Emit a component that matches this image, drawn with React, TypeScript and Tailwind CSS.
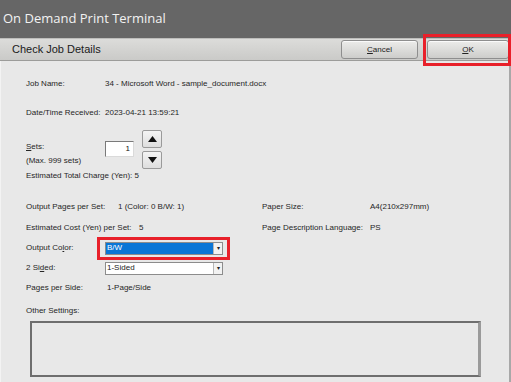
import { ReactNode } from 'react';

const font = { fontFamily: "'Liberation Sans', Arial, sans-serif" };

function Row({ children, className = '' }: { children: ReactNode; className?: string }) {
  return <div className={`flex h-[14px] items-center ${className}`}>{children}</div>;
}

function Select({ value, selected }: { value: string; selected?: boolean }) {
  return (
    <div className="flex h-[13px] w-[118px] items-center border border-[#8c8c8c] bg-white">
      <div
        className={`flex h-full flex-1 items-center px-[1px] ${
          selected ? 'bg-[#0a76d6] text-white' : 'text-[#222]'
        }`}
      >
        {value}
      </div>
      <div className="flex h-full w-[9px] items-center justify-center border-l border-[#b8b8b8] bg-[#f2f2f2] text-[6px] leading-none text-[#222]">
        ▾
      </div>
    </div>
  );
}

function SpinButton({ up }: { up?: boolean }) {
  return (
    <div className="flex h-[18px] w-[20px] items-center justify-center rounded-[2px] border border-[#9a9a9a] bg-gradient-to-b from-[#f4f4f4] to-[#dedede]">
      <svg width="9" height="6" viewBox="0 0 9 6">
        {up ? <path d="M0 6 L4.5 0 L9 6 Z" fill="#111" /> : <path d="M0 0 L4.5 6 L9 0 Z" fill="#111" />}
      </svg>
    </div>
  );
}

function HeaderButton({ children, className = '' }: { children: ReactNode; className?: string }) {
  return (
    <div
      className={`flex h-[19px] items-center justify-center rounded-[3px] border border-[#8e8e8e] bg-gradient-to-b from-[#ececea] to-[#cdcdcb] text-[8px] text-[#222] shadow-[inset_0_1px_0_#fafafa] ${className}`}
    >
      {children}
    </div>
  );
}

export default function App() {
  return (
    <div className="flex h-[382px] w-[511px] flex-col overflow-hidden bg-[#e8e8e8]" style={font}>
      {/* Title bar */}
      <div
        className="flex h-[38px] shrink-0 items-center bg-[#666666] pl-[3px] text-[13px] text-[#f2f2f2]"
        style={{ fontFamily: "'Open Sans', sans-serif" }}
      >
        On Demand Print Terminal
      </div>

      {/* Header */}
      <div className="flex h-[23px] shrink-0 items-center border-t border-[#bdbdbb] border-b border-b-[#9c9c9a] bg-gradient-to-b from-[#dcdcda] to-[#cacac8] pl-[12px] pr-[2px]">
        <span className="flex-1 text-[11px] text-[#1a1a1a]">Check Job Details</span>
        <div className="flex items-center gap-[9px]">
          <HeaderButton className="w-[77px]">
            <span>
              <u>C</u>ancel
            </span>
          </HeaderButton>
          <div className="relative">
            <HeaderButton className="w-[82px]">
              <span>
                <u>O</u>K
              </span>
            </HeaderButton>
            <div className="pointer-events-none absolute -top-[6px] -bottom-[7px] -left-[4px] -right-[2px] border-[3px] border-[#e8202a]" />
          </div>
        </div>
      </div>

      {/* Content */}
      <div className="flex flex-1 flex-col border-r-2 border-r-[#a8a8a8] border-l border-l-[#f3f3f3] pl-[25px] text-[8px] text-[#262626]">
        <Row className="mt-[16px]">
          <span className="w-[79px]">Job Name:</span>
          <span>34 - Microsoft Word - sample_document.docx</span>
        </Row>
        <Row className="mt-[15px]">
          <span className="w-[79px]">Date/Time Received:</span>
          <span>2023-04-21 13:59:21</span>
        </Row>

        {/* Sets */}
        <div className="mt-[10px] flex">
          <div className="flex w-[79px] flex-col pt-[10px]">
            <Row>
              <span>
                <u>S</u>ets:
              </span>
            </Row>
            <Row>(Max. 999 sets)</Row>
          </div>
          <div className="mt-[11px] flex h-[16px] w-[29px] items-center justify-end border border-t-[#7a7a7a] border-l-[#7a7a7a] border-r-[#dadada] border-b-[#dadada] bg-white pr-[3px] text-[#111]">
            1
          </div>
          <div className="ml-[8px] flex flex-col gap-[3px]">
            <SpinButton up />
            <SpinButton />
          </div>
        </div>
        <Row>Estimated Total Charge (Yen): 5</Row>

        {/* Output details */}
        <div className="mt-[17px] flex">
          <div className="flex w-[236px] flex-col">
            <Row>
              <span className="w-[92px]">Output Pages per Set:</span>
              <span>1 (Color: 0 B/W: 1)</span>
            </Row>
            <Row className="mt-[7px]">
              <span className="w-[113px]">Estimated Cost (Yen) per Set:</span>
              <span>5</span>
            </Row>
          </div>
          <div className="flex flex-col">
            <Row>
              <span className="w-[108px]">Paper Size:</span>
              <span>A4(210x297mm)</span>
            </Row>
            <Row className="mt-[7px]">
              <span className="w-[108px]">Page Description Language:</span>
              <span>PS</span>
            </Row>
          </div>
        </div>

        <Row className="mt-[6px]">
          <span className="w-[79px]">
            Output Co<u>l</u>or:
          </span>
          <div className="relative">
            <Select value="B/W" selected />
            <div className="pointer-events-none absolute -top-[5px] -bottom-[5px] -left-[8px] -right-[7px] border-[3px] border-[#e8202a]" />
          </div>
        </Row>
        <Row className="mt-[6px]">
          <span className="w-[79px]">
            2 Si<u>d</u>ed:
          </span>
          <Select value="1-Sided" />
        </Row>
        <Row className="mt-[6px]">
          <span className="w-[81px]">Pages per Side:</span>
          <span>1-Page/Side</span>
        </Row>

        <Row className="mt-[9px]">Other Settings:</Row>
        <div className="mt-[3px] ml-[4px] h-[56px] w-[451px] border-2 border-[#6e6e6e] border-r-[3px] border-r-[#9a9a9a]" />
      </div>
    </div>
  );
}
